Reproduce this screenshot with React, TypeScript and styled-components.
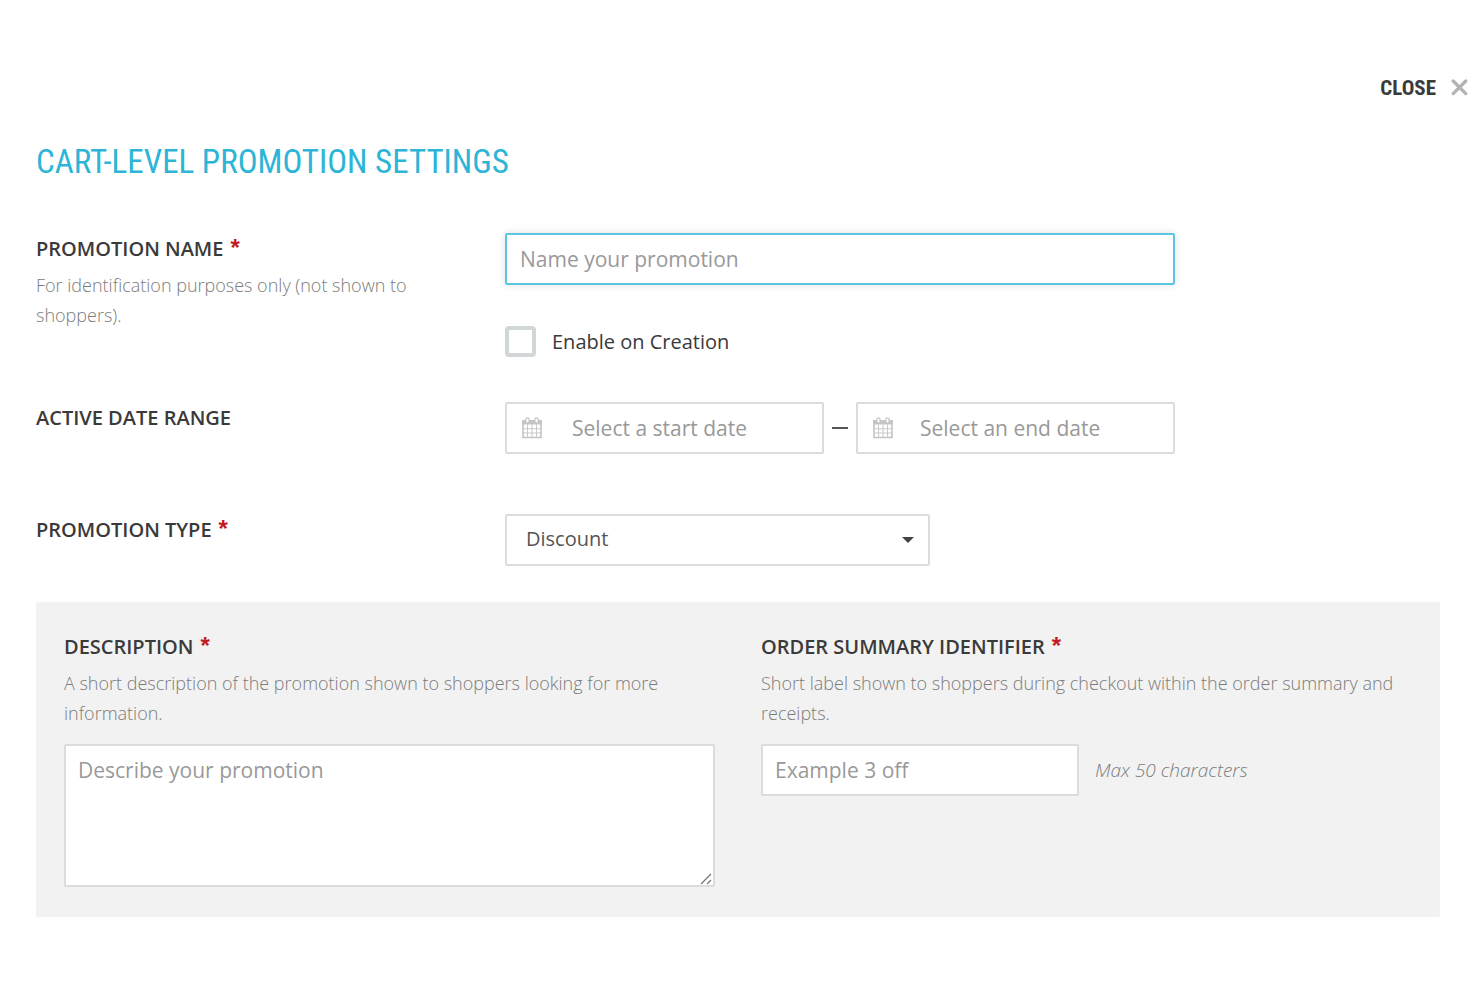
import React from 'react';
import styled, { createGlobalStyle } from 'styled-components';

const GlobalStyle = createGlobalStyle`
  *, *::before, *::after { box-sizing: border-box; }
  body {
    margin: 0;
    background: #fff;
    color: #3a3a3a;
    font-family: 'Open Sans', 'Noto Sans', sans-serif;
    font-size: 20px;
    line-height: 30px;
  }
`;

const condensed = `'Roboto Condensed', Roboto, 'Liberation Sans Narrow', sans-serif`;

const Page = styled.main`
  padding: 72px 40px 70px 36px;
`;

const TopBar = styled.header`
  display: flex;
  justify-content: flex-end;
  margin-right: -28px;
`;

const CloseButton = styled.button`
  display: flex;
  align-items: center;
  gap: 15px;
  padding: 0;
  border: 0;
  background: none;
  color: #3a3a3a;
  font: 700 21px/32px ${condensed};
  cursor: pointer;
`;

const Title = styled.h1`
  margin: 36px 0 0;
  color: #2cb5d6;
  font: 400 33px/44px ${condensed};
`;

const Form = styled.form`
  margin-top: 49px;
`;

const Row = styled.section`
  display: grid;
  grid-template-columns: minmax(0, 469fr) minmax(0, 935fr);
  align-items: start;
`;

const LabelCell = styled.div`
  padding-right: 60px;
`;

const FieldLabel = styled.label`
  display: block;
  font-size: 20px;
  font-weight: 600;
  line-height: 32px;
`;

const Star = styled.span`
  margin-left: 6px;
  color: #c11a1f;
  font-family: 'Liberation Sans', sans-serif;
  font-size: 24px;
  font-style: italic;
  font-weight: 700;
  line-height: 20px;
`;

const Help = styled.p`
  margin: 5px 0 0;
  color: #7c7c7c;
  font-size: 18px;
  font-weight: 300;
  line-height: 30px;
`;

const Fields = styled.div<{ $bottom: number }>`
  max-width: 670px;
  padding-bottom: ${({ $bottom }) => $bottom}px;
`;

const TextInput = styled.input<{ $active?: boolean; $indent?: number }>`
  display: block;
  width: 100%;
  height: 52px;
  padding: 0 14px 1px ${({ $indent = 13 }) => $indent}px;
  border: 2px solid ${({ $active }) => ($active ? '#5bc5e0' : '#dcdcdc')};
  border-radius: 2px;
  outline: 0;
  background: #fff;
  box-shadow: ${({ $active }) => ($active ? '0 0 8px rgba(0, 0, 0, 0.12)' : 'none')};
  color: #555;
  font: inherit;
  font-size: 21px;

  &::placeholder { color: #999; opacity: 1; }
`;

const CheckLabel = styled.label`
  display: flex;
  align-items: center;
  gap: 16px;
  width: fit-content;
  margin-top: 41px;
`;

const Checkbox = styled.input`
  appearance: none;
  width: 31px;
  height: 31px;
  margin: 0;
  border: 4px solid #d1d7d9;
  border-radius: 4px;
  background: #fff;

  &:checked { background: #2cb5d6; }
`;

const DateRange = styled.div`
  display: grid;
  grid-template-columns: 1fr 16px 1fr;
  align-items: center;
  gap: 8px;
`;

const DateBox = styled.div`
  position: relative;
`;

const CalendarSvg = styled.svg`
  position: absolute;
  top: 15px;
  left: 16px;
  pointer-events: none;
`;

const Dash = styled.span`
  height: 2px;
  background: #555;
`;

const SelectBox = styled.div`
  position: relative;
  max-width: 425px;
`;

const Select = styled.select`
  appearance: none;
  display: block;
  width: 100%;
  height: 52px;
  padding: 0 48px 2px 19px;
  border: 2px solid #dcdcdc;
  border-radius: 2px;
  background: #fff;
  color: #555;
  font: inherit;
`;

const Caret = styled.svg`
  position: absolute;
  top: 23px;
  right: 16px;
  pointer-events: none;
`;

const Panel = styled.section`
  display: grid;
  grid-template-columns: repeat(2, minmax(0, 1fr));
  gap: 46px;
  padding: 29px 28px 30px;
  border-radius: 2px;
  background: #f2f2f2;
`;

const TextAreaBox = styled.div`
  position: relative;
  margin-top: 16px;
`;

const TextArea = styled.textarea`
  display: block;
  width: 100%;
  height: 143px;
  padding: 9px 12px;
  border: 2px solid #dcdcdc;
  border-radius: 2px;
  outline: 0;
  resize: vertical;
  background: #fff;
  color: #555;
  font: inherit;
  font-size: 21px;

  &::placeholder { color: #999; opacity: 1; }
  &::-webkit-resizer { display: none; }
`;

const Grip = styled.svg`
  position: absolute;
  right: 2px;
  bottom: 1px;
  pointer-events: none;
`;

const InlineField = styled.div`
  display: grid;
  grid-template-columns: minmax(0, 318px) auto;
  justify-content: start;
  align-items: center;
  gap: 16px;
  margin-top: 16px;
`;

const Hint = styled.em`
  color: #7c7c7c;
  font-size: 19px;
  font-weight: 300;
`;

const Required = () => <Star aria-hidden="true">*</Star>;

const CalendarIcon = () => (
  <CalendarSvg width="22" height="22" viewBox="0 0 22 22" aria-hidden="true">
    <path d="M2 4h18v16.500H2z" fill="#fff" stroke="#c4c4c4" strokeWidth="1.600" />
    <path d="M1.200 3h19.600v4.500H1.200z" fill="#c4c4c4" />
    <path d="M6.500 7.500V20M11 7.500V20M15.500 7.500V20M2 11.800h18M2 16h18" stroke="#c9c9c9" />
    <rect x="4.900" y=".8" width="3.200" height="5.400" rx="1.600" fill="#fff" stroke="#c4c4c4" strokeWidth="1.200" />
    <rect x="13.900" y=".8" width="3.200" height="5.400" rx="1.600" fill="#fff" stroke="#c4c4c4" strokeWidth="1.200" />
  </CalendarSvg>
);

export default function App() {
  return (
    <>
      <GlobalStyle />
      <Page>
        <TopBar>
          <CloseButton type="button">
            CLOSE
            <svg width="17" height="18" viewBox="0 0 17 18" aria-hidden="true">
              <path d="M2.200 2l12.600 12.600M14.800 2L2.200 14.600" stroke="#b3b3b3" strokeWidth="3.200" strokeLinecap="round" />
            </svg>
          </CloseButton>
        </TopBar>
        <Title>CART-LEVEL PROMOTION SETTINGS</Title>
        <Form onSubmit={(event) => event.preventDefault()}>
          <Row>
            <LabelCell>
              <FieldLabel htmlFor="name">PROMOTION NAME<Required /></FieldLabel>
              <Help>For identification purposes only (not shown to shoppers).</Help>
            </LabelCell>
            <Fields $bottom={45}>
              <TextInput id="name" $active placeholder="Name your promotion" />
              <CheckLabel>
                <Checkbox type="checkbox" />
                Enable on Creation
              </CheckLabel>
            </Fields>
          </Row>
          <Row>
            <LabelCell>
              <FieldLabel htmlFor="start">ACTIVE DATE RANGE</FieldLabel>
            </LabelCell>
            <Fields $bottom={60}>
              <DateRange>
                <DateBox>
                  <TextInput id="start" $indent={65} placeholder="Select a start date" />
                  <CalendarIcon />
                </DateBox>
                <Dash />
                <DateBox>
                  <TextInput aria-label="End date" $indent={62} placeholder="Select an end date" />
                  <CalendarIcon />
                </DateBox>
              </DateRange>
            </Fields>
          </Row>
          <Row>
            <LabelCell>
              <FieldLabel htmlFor="type">PROMOTION TYPE<Required /></FieldLabel>
            </LabelCell>
            <Fields $bottom={36}>
              <SelectBox>
                <Select id="type" defaultValue="Discount">
                  <option>Discount</option>
                </Select>
                <Caret width="12" height="6" viewBox="0 0 12 6" aria-hidden="true">
                  <path d="M0 0h12L6 6z" fill="#444" />
                </Caret>
              </SelectBox>
            </Fields>
          </Row>
          <Panel>
            <div>
              <FieldLabel htmlFor="description">DESCRIPTION<Required /></FieldLabel>
              <Help>A short description of the promotion shown to shoppers looking for more information.</Help>
              <TextAreaBox>
                <TextArea id="description" placeholder="Describe your promotion" />
                <Grip width="14" height="14" viewBox="0 0 14 14" aria-hidden="true">
                  <path d="M2 12L12 2M8 12l4-4" stroke="#777" strokeWidth="1.300" />
                </Grip>
              </TextAreaBox>
            </div>
            <div>
              <FieldLabel htmlFor="identifier">ORDER SUMMARY IDENTIFIER<Required /></FieldLabel>
              <Help>Short label shown to shoppers during checkout within the order summary and receipts.</Help>
              <InlineField>
                <TextInput id="identifier" maxLength={50} $indent={12} placeholder="Example 3 off" />
                <Hint>Max 50 characters</Hint>
              </InlineField>
            </div>
          </Panel>
        </Form>
      </Page>
    </>
  );
}
